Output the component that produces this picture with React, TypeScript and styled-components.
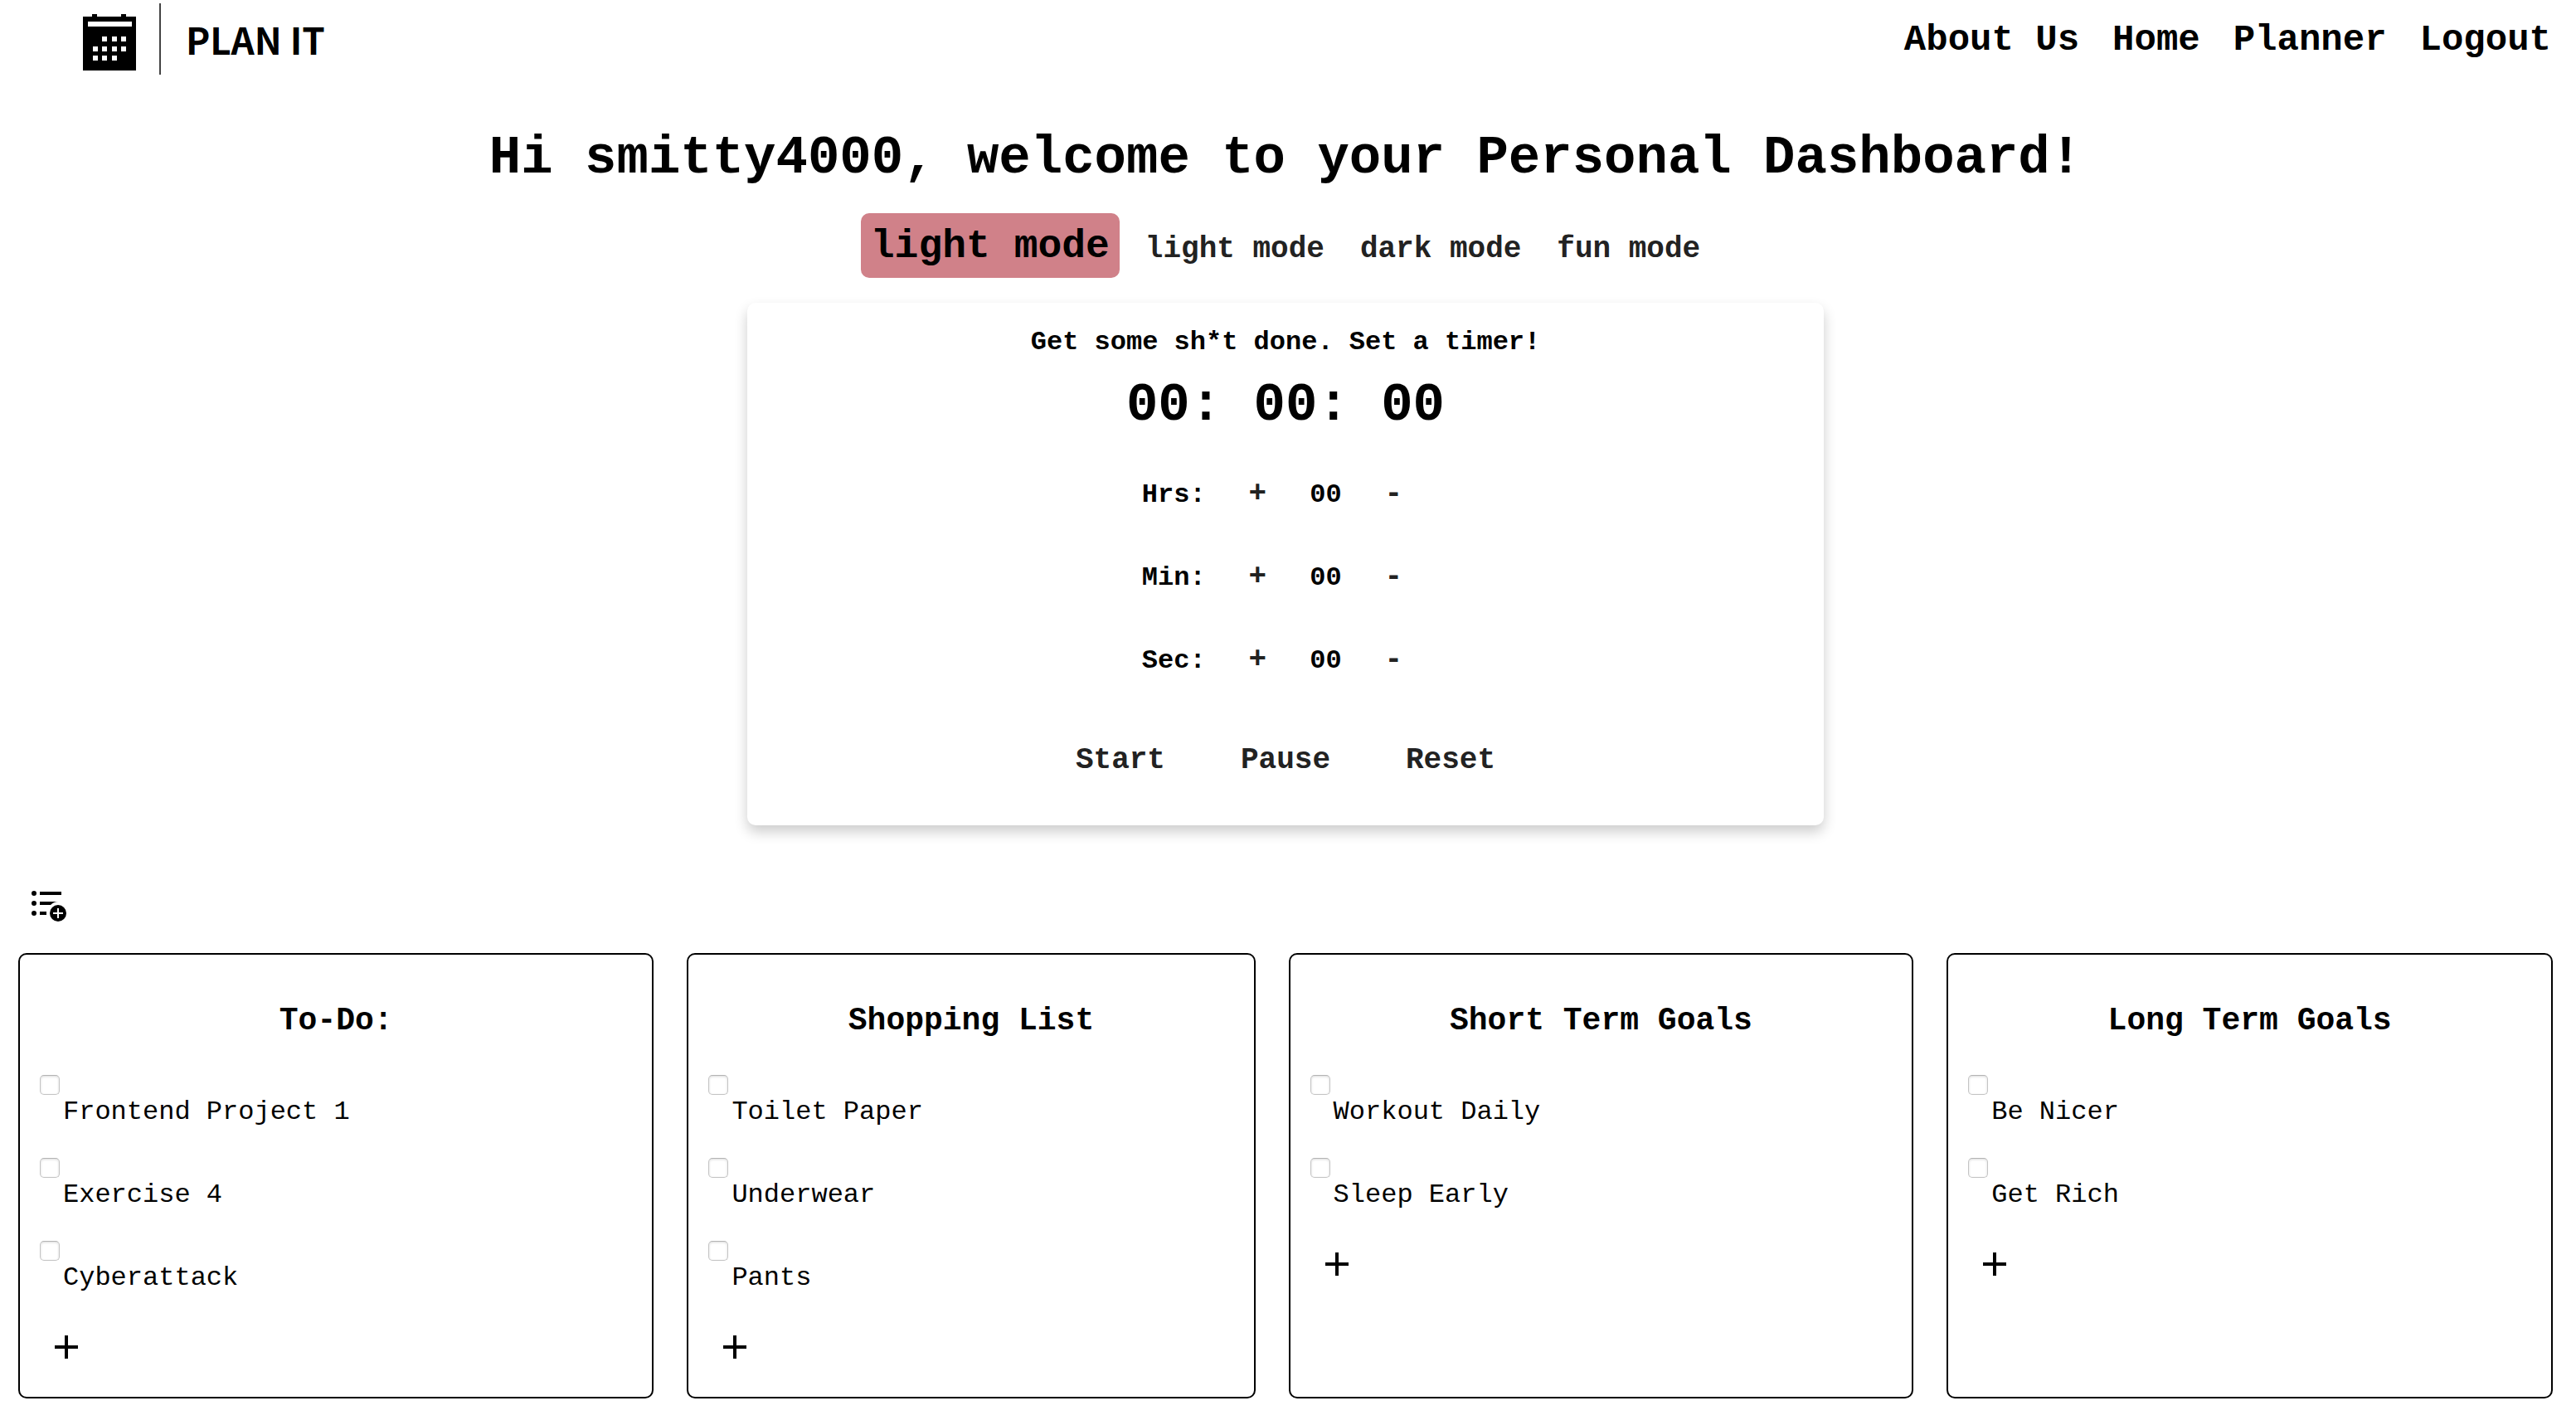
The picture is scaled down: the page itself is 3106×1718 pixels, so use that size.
import React, { useEffect, useState } from "react";
import styled, { createGlobalStyle } from "styled-components";

const mono = `"Liberation Mono", "Courier New", monospace`;

const GlobalStyle = createGlobalStyle`
  *, *::before, *::after { box-sizing: border-box; }
  body { margin: 0; background: #fff; color: #000; font-family: ${mono}; font-size: 32px; line-height: 36px; }
  h1, h2, p, ul { margin: 0; padding: 0; }
`;

const Page = styled.div`
  padding: 0 28px 32px 22px;
`;

const Header = styled.header`
  display: flex;
  align-items: center;
  justify-content: space-between;
  height: 94px;
`;

const Brand = styled.a`
  display: flex;
  align-items: center;
  padding-left: 77px;
  color: #000;
  text-decoration: none;
`;

const Divider = styled.span`
  width: 2px;
  height: 86px;
  margin: 0 30px 0 27px;
  background: #444;
`;

const BrandName = styled.span`
  font-family: "Noto Sans CJK JP", sans-serif;
  font-size: 44px;
  line-height: 60px;
  font-weight: 700;
  white-space: nowrap;
`;

const Nav = styled.nav`
  display: flex;
  gap: 40px;
  padding: 2px 2px 0 0;
`;

const NavLink = styled.a`
  color: #000;
  font-size: 44px;
  line-height: 50px;
  font-weight: 700;
  text-decoration: none;
`;

const Title = styled.h1`
  margin-top: 61px;
  font-size: 64px;
  line-height: 72px;
  text-align: center;
`;

const ModeBar = styled.div`
  display: flex;
  justify-content: center;
  align-items: baseline;
  gap: 19px;
  margin-top: 30px;
`;

const CurrentMode = styled.span`
  padding: 13px 12px 11px;
  border-radius: 10px;
  background: #d08189;
  font-size: 48px;
  line-height: 54px;
  font-weight: 700;
`;

const TextButton = styled.button`
  padding: 0 12px;
  border: 0;
  background: transparent;
  color: #222;
  font-family: inherit;
  font-size: 36px;
  line-height: 40px;
  font-weight: 700;
  cursor: pointer;
`;

const TimerCard = styled.section`
  display: flex;
  flex-direction: column;
  align-items: center;
  width: 42.5%;
  min-width: 800px;
  margin: 30px auto 0;
  padding: 30px 0 58px;
  border-radius: 10px;
  background: #fff;
  box-shadow: 0 8px 16px rgba(0, 0, 0, 0.2);
  font-weight: 700;
`;

const Clock = styled.div`
  margin: 22px 0;
  font-size: 64px;
  line-height: 72px;
`;

const UnitRow = styled.div`
  display: flex;
  align-items: baseline;
  gap: 40px;
  padding: 29px 20px 31px 0;
`;

const TimerActions = styled.div`
  display: flex;
  gap: 67px;
  margin-top: 50px;
`;

const IconButton = styled.button<{ $pad: number }>`
  display: block;
  padding: ${(p) => p.$pad}px;
  border: 0;
  background: transparent;
  color: #000;
  line-height: 0;
  cursor: pointer;
`;

const Toolbar = styled.div`
  margin: 62px 0 20px;
`;

const Lists = styled.main`
  display: flex;
  gap: 40px;
`;

const ListCard = styled.section`
  flex: 1 1 auto;
  padding: 58px 24px 28px;
  border: 2px solid #000;
  border-radius: 10px;
`;

const ListTitle = styled.h2`
  margin-bottom: 39px;
  font-size: 38px;
  line-height: 44px;
  text-align: center;
`;

const Items = styled.ul`
  list-style: none;
`;

const Item = styled.li`
  height: 100px;
  padding: 4px 4px 0 0;
`;

const ItemLabel = styled.label`
  display: grid;
  grid-template-columns: 24px auto;
  grid-template-rows: 24px 38px;
  justify-content: start;
  gap: 2px 4px;
  white-space: nowrap;
`;

const ItemText = styled.span`
  grid-column: 2;
  grid-row: 2;
  line-height: 38px;
`;

const Checkbox = styled.input`
  appearance: none;
  width: 24px;
  height: 24px;
  margin: 0;
  border: 1px solid #c4c4c4;
  border-top-color: #b4b4b4;
  border-radius: 5px;
  background: #fff;
  box-shadow: inset 0 1px 3px rgba(0, 0, 0, 0.15);

  &:checked {
    background: #1a73e8;
  }
`;

const CalendarLogo = () => (
  <svg width="66" height="80" viewBox="0 -10 66 80" aria-hidden="true">
    <path d="M1 3h11V0h6v3h29V0h6v3h12v65H1z" fill="#000" />
    <path
      fill="#fff"
      d="M7 9h53v6H7zM24 27h6v6h-6zM36 27h6v6h-6zM47 27h6v6h-6zM13 39h6v6h-6zM24 39h6v6h-6zM36 39h6v6h-6zM47 39h6v6h-6zM13 50h6v6h-6zM24 50h6v6h-6zM36 50h6v6h-6z"
    />
  </svg>
);

const ListAddIcon = () => (
  <svg width="48" height="48" viewBox="0 0 48 48" aria-hidden="true">
    <circle cx="7" cy="8" r="3" />
    <circle cx="7" cy="20" r="3" />
    <circle cx="7" cy="32" r="3" />
    <path d="M14 6h26v4H14zM14 18h22q-5 0-9 4H14zM14 30h8v4h-8z" />
    <circle cx="36" cy="32" r="10" />
    <path d="M36 26v12M30 32h12" stroke="#fff" strokeWidth="2" />
  </svg>
);

const PlusIcon = () => (
  <svg width="48" height="48" viewBox="0 0 24 24" aria-hidden="true">
    <path d="M19 13h-6v6h-2v-6H5v-2h6V5h2v6h6z" />
  </svg>
);

const modes = ["light mode", "dark mode", "fun mode"];

const lists = [
  { title: "To-Do:", items: ["Frontend Project 1", "Exercise 4", "Cyberattack"] },
  { title: "Shopping List", items: ["Toilet Paper", "Underwear", "Pants"] },
  { title: "Short Term Goals", items: ["Workout Daily", "Sleep Early"] },
  { title: "Long Term Goals", items: ["Be Nicer", "Get Rich"] },
];

const units = [
  { label: "Hrs:", name: "hours", max: 99 },
  { label: "Min:", name: "minutes", max: 59 },
  { label: "Sec:", name: "seconds", max: 59 },
];

const pad = (n: number) => String(n).padStart(2, "0");

function Timer() {
  const [values, setValues] = useState([0, 0, 0]);
  const [left, setLeft] = useState(0);
  const [running, setRunning] = useState(false);

  useEffect(() => {
    if (!running) return;
    const id = setInterval(() => setLeft((s) => Math.max(0, s - 1)), 1000);
    return () => clearInterval(id);
  }, [running]);

  const change = (index: number, step: number) => {
    const next = values.map((v, i) =>
      i === index ? Math.min(units[i].max, Math.max(0, v + step)) : v
    );
    setValues(next);
    setLeft(next[0] * 3600 + next[1] * 60 + next[2]);
  };

  const reset = () => {
    setRunning(false);
    setValues([0, 0, 0]);
    setLeft(0);
  };

  return (
    <TimerCard>
      <p>Get some sh*t done. Set a timer!</p>
      <Clock>
        {`${pad(Math.floor(left / 3600))}: ${pad(Math.floor(left / 60) % 60)}: ${pad(left % 60)}`}
      </Clock>
      {units.map((unit, i) => (
        <UnitRow key={unit.name}>
          <span>{unit.label}</span>
          <TextButton type="button" aria-label={`More ${unit.name}`} onClick={() => change(i, 1)}>
            +
          </TextButton>
          <span>{pad(values[i])}</span>
          <TextButton type="button" aria-label={`Fewer ${unit.name}`} onClick={() => change(i, -1)}>
            -
          </TextButton>
        </UnitRow>
      ))}
      <TimerActions>
        <TextButton type="button" onClick={() => setRunning(true)}>Start</TextButton>
        <TextButton type="button" onClick={() => setRunning(false)}>Pause</TextButton>
        <TextButton type="button" onClick={reset}>Reset</TextButton>
      </TimerActions>
    </TimerCard>
  );
}

export default function App() {
  const [mode, setMode] = useState(modes[0]);

  return (
    <>
      <GlobalStyle />
      <Page>
        <Header>
          <Brand href="#">
            <CalendarLogo />
            <Divider />
            <BrandName>PLAN IT</BrandName>
          </Brand>
          <Nav>
            {["About Us", "Home", "Planner", "Logout"].map((name) => (
              <NavLink key={name} href="#">{name}</NavLink>
            ))}
          </Nav>
        </Header>
        <Title>Hi smitty4000, welcome to your Personal Dashboard!</Title>
        <ModeBar>
          <CurrentMode>{mode}</CurrentMode>
          {modes.map((name) => (
            <TextButton key={name} type="button" onClick={() => setMode(name)}>
              {name}
            </TextButton>
          ))}
        </ModeBar>
        <Timer />
        <Toolbar>
          <IconButton type="button" $pad={12} aria-label="Add list">
            <ListAddIcon />
          </IconButton>
        </Toolbar>
        <Lists>
          {lists.map((list) => (
            <ListCard key={list.title}>
              <ListTitle>{list.title}</ListTitle>
              <Items>
                {list.items.map((item) => (
                  <Item key={item}>
                    <ItemLabel>
                      <Checkbox type="checkbox" />
                      <ItemText>{item}</ItemText>
                    </ItemLabel>
                  </Item>
                ))}
              </Items>
              <IconButton type="button" $pad={8} aria-label={`Add to ${list.title}`}>
                <PlusIcon />
              </IconButton>
            </ListCard>
          ))}
        </Lists>
      </Page>
    </>
  );
}
